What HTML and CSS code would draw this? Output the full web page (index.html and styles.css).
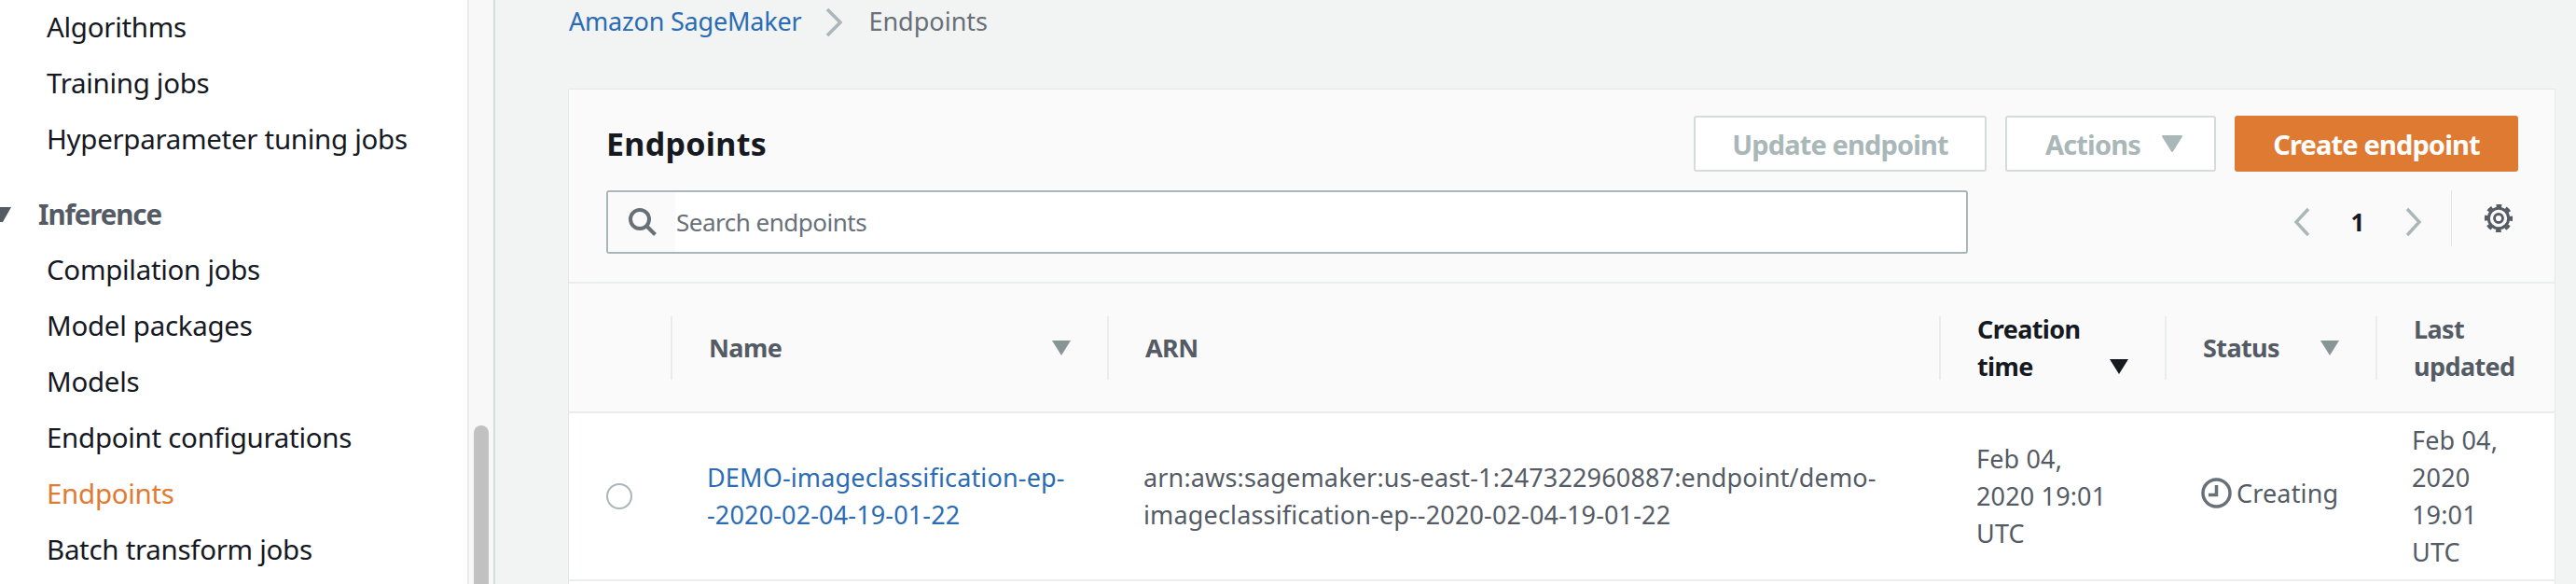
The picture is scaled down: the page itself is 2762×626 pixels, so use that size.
FILE: index.html
```html
<!DOCTYPE html>
<html lang="en">
<head>
<meta charset="utf-8">
<title>Endpoints</title>
<link rel="stylesheet" href="styles.css">
</head>
<body>
<div class="app">
  <nav class="side">
    <ul class="nav-list">
      <li>Algorithms</li>
      <li>Training jobs</li>
      <li>Hyperparameter tuning jobs</li>
    </ul>
    <div class="nav-head"><svg class="nav-caret" width="24" height="16" viewBox="0 0 24 16"><path d="M0 0h24L15 16H0z" fill="#545b64"/></svg>Inference</div>
    <ul class="nav-list">
      <li>Compilation jobs</li>
      <li>Model packages</li>
      <li>Models</li>
      <li>Endpoint configurations</li>
      <li class="active">Endpoints</li>
      <li>Batch transform jobs</li>
    </ul>
  </nav>
  <div class="gutter"><div class="thumb"></div></div>
  <main class="main">
    <div class="crumbs">
      <a class="crumb-link">Amazon SageMaker</a>
      <svg class="crumb-sep" width="18" height="32" viewBox="0 0 18 32"><path d="M2 2l14 14L2 30" fill="none" stroke="#aab7b8" stroke-width="3.6"/></svg>
      <span class="crumb-cur">Endpoints</span>
    </div>
    <section class="panel">
      <div class="panel-head">
        <div class="head-row">
          <h1 class="title">Endpoints</h1>
          <div class="actions">
            <button class="btn btn-update">Update endpoint</button>
            <button class="btn btn-actions">Actions<svg width="22" height="18" viewBox="0 0 22 18"><path d="M1 1h20L11 17z" fill="#aab7b8" stroke="#aab7b8" stroke-width="2" stroke-linejoin="round"/></svg></button>
            <button class="btn btn-create">Create endpoint</button>
          </div>
        </div>
        <div class="tool-row">
          <div class="search">
            <div class="search-icon">
              <svg width="30" height="30" viewBox="0 0 30 30"><circle cx="12" cy="12" r="10" fill="none" stroke="#687078" stroke-width="4"/><path d="M19 19l9.500 9.500" stroke="#687078" stroke-width="4"/></svg>
            </div>
            <span class="search-text">Search endpoints</span>
          </div>
          <div class="pager">
            <svg class="chev" width="20" height="32" viewBox="0 0 20 32"><path d="M17 2L4 16l13 14" fill="none" stroke="#aab7b8" stroke-width="3.4"/></svg>
            <span class="page-num">1</span>
            <svg class="chev" width="20" height="32" viewBox="0 0 20 32"><path d="M3 2l13 14L3 30" fill="none" stroke="#aab7b8" stroke-width="3.4"/></svg>
          </div>
          <div class="settings">
            <svg width="32" height="32" viewBox="0 0 32 32"><circle cx="16" cy="16" r="10.700" fill="none" stroke="#545b64" stroke-width="3"/><circle cx="16" cy="16" r="13.500" fill="none" stroke="#545b64" stroke-width="3.200" stroke-dasharray="5.800 4.800" stroke-dashoffset="2.900"/><circle cx="16" cy="16" r="4.500" fill="none" stroke="#545b64" stroke-width="2.800"/></svg>
          </div>
        </div>
      </div>
      <table class="grid">
        <colgroup>
          <col class="c-sel"><col class="c-name"><col class="c-arn"><col class="c-time"><col class="c-status"><col class="c-upd">
        </colgroup>
        <thead>
          <tr>
            <th></th>
            <th><div class="th-in"><span>Name</span><svg class="sort" width="20" height="16" viewBox="0 0 20 16"><path d="M0 0h20L10 16z" fill="#879596"/></svg></div></th>
            <th><div class="th-in"><span>ARN</span></div></th>
            <th class="sorted"><div class="th-in"><span>Creation<br>time</span><svg class="sort sort-low" width="20" height="16" viewBox="0 0 20 16"><path d="M0 0h20L10 16z" fill="#16191f"/></svg></div></th>
            <th><div class="th-in"><span>Status</span><svg class="sort" width="20" height="16" viewBox="0 0 20 16"><path d="M0 0h20L10 16z" fill="#879596"/></svg></div></th>
            <th><div class="th-in"><span>Last<br>updated</span></div></th>
          </tr>
        </thead>
        <tbody>
          <tr>
            <td class="td-sel"><span class="radio"></span></td>
            <td class="td-name"><a class="link">DEMO-imageclassification-ep-<br>-2020-02-04-19-01-22</a></td>
            <td class="td-arn">arn:aws:sagemaker:us-east-1:247322960887:endpoint/demo-<br>imageclassification-ep--2020-02-04-19-01-22</td>
            <td class="td-time">Feb 04,<br>2020 19:01<br>UTC</td>
            <td class="td-status"><span class="status"><svg width="33" height="33" viewBox="0 0 33 33"><circle cx="16.500" cy="16.500" r="14.500" fill="none" stroke="#687078" stroke-width="3.500"/><path d="M16.500 8v10.500H8" fill="none" stroke="#687078" stroke-width="3.500"/></svg>Creating</span></td>
            <td class="td-upd">Feb 04,<br>2020<br>19:01<br>UTC</td>
          </tr>
        </tbody>
      </table>
    </section>
  </main>
</div>
</body>
</html>
```

FILE: styles.css
```css
* { box-sizing: border-box; }
html, body { margin: 0; padding: 0; height: 626px; overflow: hidden; }
body { font-family: "Noto Sans", "Open Sans", sans-serif; font-size: 27px; color: #16191f; background: #f2f3f3; }

.app { display: flex; height: 626px; overflow: hidden; }

.side { width: 501px; flex: none; background: #fff; overflow: hidden; font-size: 29.5px; }
.nav-list { list-style: none; margin: 0; padding: 0 0 0 50px; }
.nav-list li { height: 60px; line-height: 58px; letter-spacing: -0.3px; white-space: nowrap; }
.nav-list .active { color: #e07b33; }
.nav-head { height: 60px; line-height: 58px; margin-top: 20px; display: flex; align-items: center; font-weight: 700; color: #545b64; letter-spacing: -1.1px; }
.nav-caret { margin-left: -12px; margin-right: 29px; flex: none; }

.gutter { width: 30px; flex: none; background: #f8f8f8; border-left: 2px solid #e9ebed; border-right: 2px solid #d5dbdb; position: relative; }
.thumb { position: absolute; left: 5px; top: 456px; width: 16px; height: 180px; border-radius: 8px; background: #c1c1c1; }

.main { flex: 1; min-width: 0; padding: 0 22px 0 78px; }

.crumbs { height: 95px; display: flex; align-items: flex-start; padding: 3px 0 0 1px; line-height: 40px; letter-spacing: -0.2px; }
.crumb-link { color: #2a6cb3; }
.crumb-sep { margin: 5px 28px 0 26px; flex: none; }
.crumb-cur { color: #687078; letter-spacing: 0; }

.panel { background: #fff; border: 1px solid #e4e7e8; height: 600px; }
.panel-head { background: #fafafa; padding: 28px 39px 30px 40px; border-bottom: 2px solid #eaeded; }
.head-row { display: flex; justify-content: space-between; align-items: center; height: 60px; }
.title { margin: 0; font-size: 34px; font-weight: 700; letter-spacing: 0.3px; line-height: 60px; }
.actions { display: flex; gap: 20px; }
.btn { height: 60px; font: 700 29px "Noto Sans", sans-serif; letter-spacing: -0.85px; border-radius: 3px; background: #fff; border: 2px solid #d5dbdb; color: #aab7b8; padding: 0; display: flex; align-items: center; justify-content: center; }
.btn-update { width: 314px; }
.btn-actions { width: 226px; gap: 23px; justify-content: flex-start; padding-left: 41px; }
.btn-create { width: 304px; background: #df7a33; border-color: #df7a33; color: #fff; }

.tool-row { display: flex; align-items: flex-start; margin-top: 20px; height: 68px; }
.search { width: 1460px; height: 68px; background: #fff; border: 2px solid #aab7b8; border-radius: 3px; display: flex; align-items: center; overflow: hidden; color: #687078; font-size: 26px; letter-spacing: -0.5px; }
.search-icon { width: 72px; height: 100%; flex: none; background: #fafafa; display: flex; align-items: center; padding-left: 22px; }
.search-text { margin-left: 1px; }
.pager { display: flex; align-items: center; height: 68px; margin-left: 348px; }
.page-num { width: 100px; text-align: center; font-weight: 700; font-size: 26px; }
.chev { flex: none; }
.settings { margin-left: 30px; height: 60px; border-left: 1px solid #e4e7e8; padding: 14px 0 0 34px; }

.grid { width: 100%; table-layout: fixed; border-collapse: collapse; }
.c-sel { width: 109px; }
.c-name { width: 468px; }
.c-arn { width: 892px; }
.c-time { width: 242px; }
.c-status { width: 226px; }

.grid thead tr { height: 138px; background: #fafafa; }
.grid th { padding: 0; border-bottom: 2px solid #eaeded; font-weight: 700; text-align: left; color: #545b64; vertical-align: middle; }
.grid th.sorted { color: #16191f; }
.th-in { height: 68px; border-left: 2px solid #eaeded; padding: 0 39px 0 39px; display: flex; justify-content: space-between; align-items: center; line-height: 40px; letter-spacing: -0.6px; }
.sort { flex: none; }
.sort-low { align-self: flex-end; margin-bottom: 6px; }

.grid tbody tr { height: 180px; }
.grid td { padding: 0 0 0 39px; border-bottom: 2px solid #eaeded; line-height: 40px; color: #545b64; vertical-align: middle; letter-spacing: 0.15px; }
.grid .td-sel { padding-left: 40px; }
.grid .td-time { padding-left: 40px; }
.radio { display: block; width: 28px; height: 28px; border: 2px solid #aab7b8; border-radius: 50%; }
.link { color: #2a6cb3; }
.status { display: inline-flex; align-items: center; gap: 5px; }
```
